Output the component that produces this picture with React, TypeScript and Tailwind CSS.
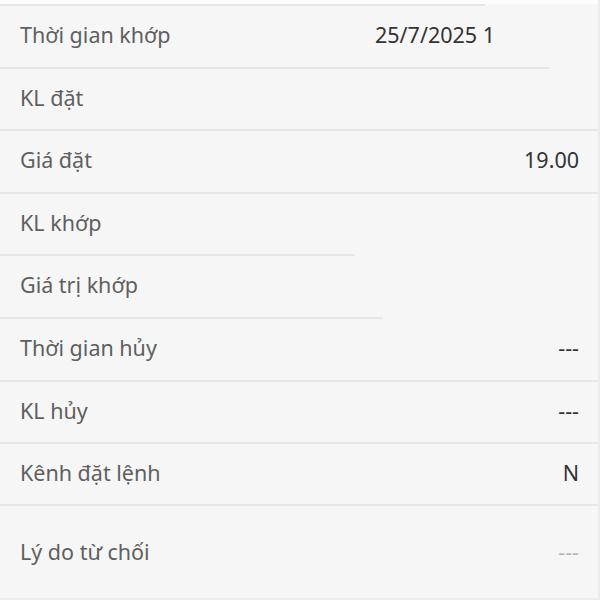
import React from 'react';

interface Row {
  label: string;
  value?: string;
  line: string; // width of divider under the row
  h: string;
}

const rows: Row[] = [
  { label: 'Thời gian khớp', line: 'w-[550px]', h: 'h-[61px]' },
  { label: 'KL đặt', line: 'w-full', h: 'h-[60px]' },
  { label: 'Giá đặt', value: '19.00', line: 'w-full', h: 'h-[61px]' },
  { label: 'KL khớp', line: 'w-[355px]', h: 'h-[60px]' },
  { label: 'Giá trị khớp', line: 'w-[383px]', h: 'h-[61px]' },
  { label: 'Thời gian hủy', value: '---', line: 'w-full', h: 'h-[61px]' },
  { label: 'KL hủy', value: '---', line: 'w-full', h: 'h-[60px]' },
  { label: 'Kênh đặt lệnh', value: 'N', line: 'w-full', h: 'h-[60px]' }
];

function App(): JSX.Element {
  return (
    <div
      className="w-[600px] h-[600px] overflow-hidden bg-[#f6f6f6] flex flex-col border-r-2 border-[#ececec]"
      style={{ fontFamily: '"Noto Sans", sans-serif' }}>
      {/* top edge */}
      <div className="h-[4px] bg-[#fcfcfc] shrink-0"></div>
      <div className="h-[2px] w-[485px] bg-[#e6e6e6] shrink-0"></div>

      {rows.map((row, idx) => (
        <React.Fragment key={row.label}>
          <div className={`${row.h} shrink-0 flex items-center pl-[20px] pr-[19px] pb-[3px] text-[21.5px] leading-none`}>
            <span className="text-[#5f5f5f]">{row.label}</span>
            {idx === 0 && (
              <div className="ml-auto mr-[85px] w-[119px] overflow-hidden whitespace-nowrap text-[#333333]">
                25/7/2025 10:12:45
              </div>
            )}
            {row.value && <span className="ml-auto text-[#333333]">{row.value}</span>}
          </div>
          <div className={`h-[2px] ${row.line} bg-[#e6e6e6] shrink-0`}></div>
        </React.Fragment>
      ))}

      {/* Lý do từ chối */}
      <div className="h-[92px] shrink-0 flex items-center pl-[20px] pr-[19px] text-[21.5px] leading-none">
        <span className="text-[#5f5f5f]">Lý do từ chối</span>
        <span className="ml-auto text-[#b5b5b5]">---</span>
      </div>
      <div className="h-[2px] w-full bg-[#ececec] shrink-0"></div>
    </div>
  );
}

export default App;
